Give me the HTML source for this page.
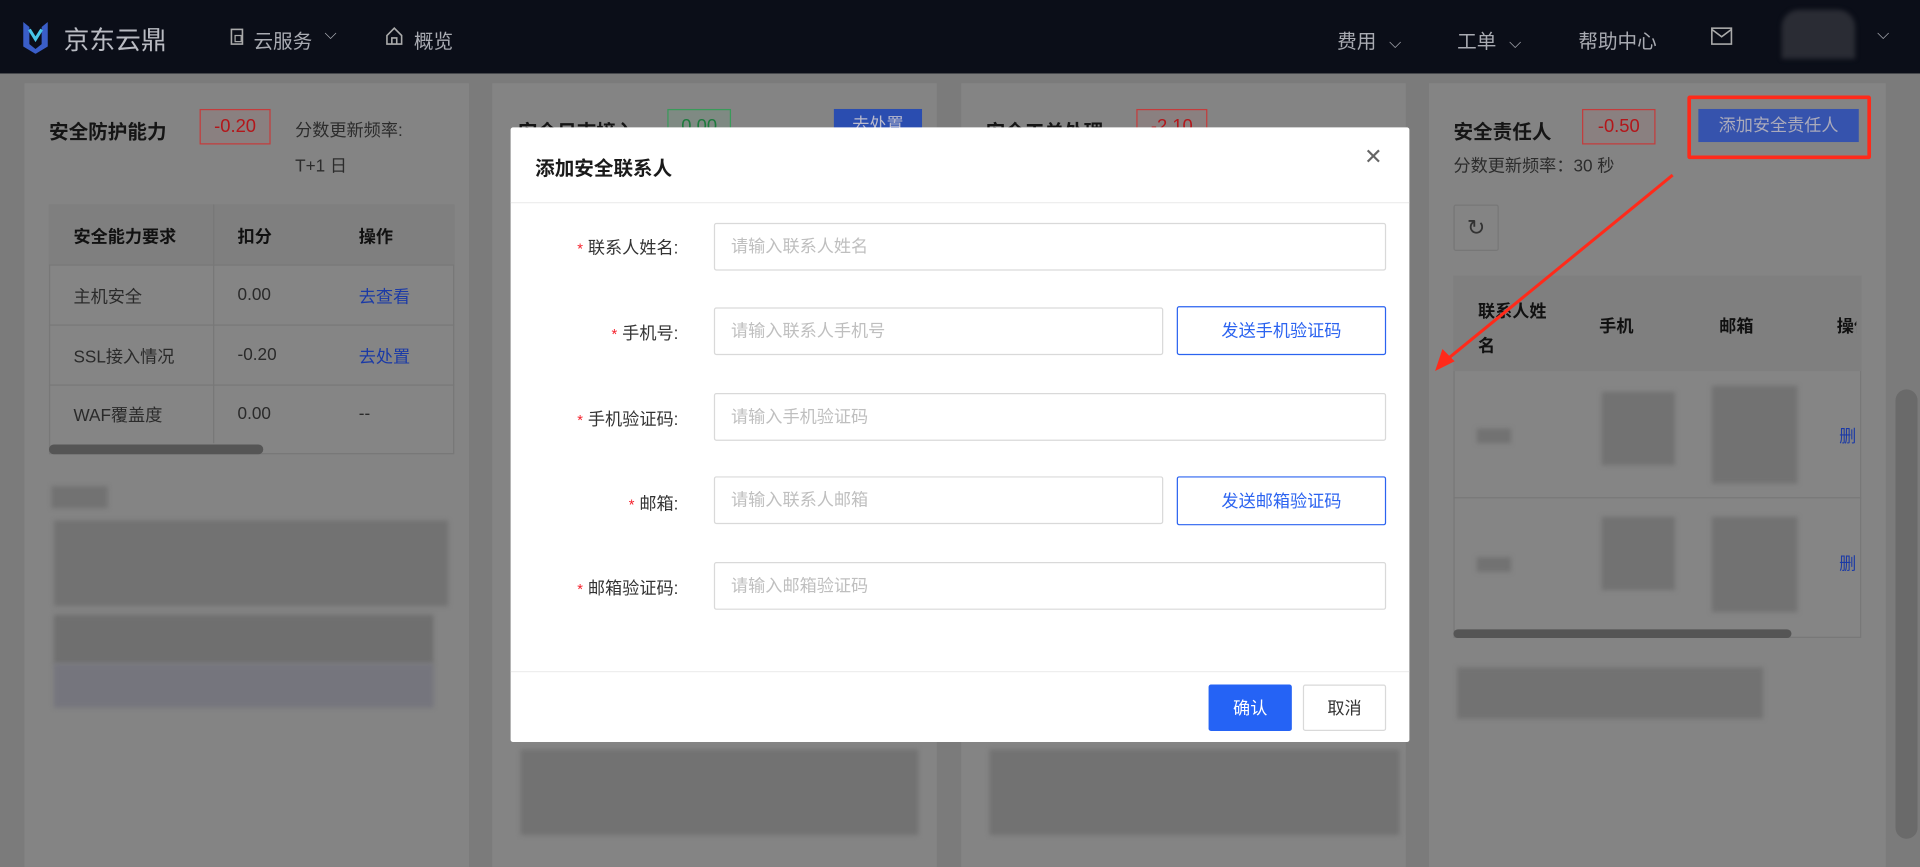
<!DOCTYPE html>
<html><head><meta charset="utf-8"><style>
*{box-sizing:border-box;margin:0;padding:0}
html,body{width:1920px;height:839px;overflow:hidden;background:#7b7b7b;font-family:"Liberation Sans","Noto Sans CJK SC",sans-serif}
#w{position:absolute;left:0;top:0;width:1568px;height:685px;transform:scale(1.22449);transform-origin:0 0;background:#7b7b7b}
.a{position:absolute}
.nav{left:0;top:0;width:1568px;height:60px;background:#0b0e18;color:#a9abb2;font-size:16px}
.card{background:#848484;top:68px;height:640px}
.t{font-size:16px;font-weight:bold;color:#151515}
.badge{height:29px;border:1px solid #c43c3c;color:#b3161a;font-size:15px;line-height:27px;text-align:center;background:#8a8080}
.g{font-size:14px;color:#2c2c2c}
.blur{background:#727272;filter:blur(2px)}
.modal{left:417px;top:104px;width:734px;height:502px;background:#fff;border-radius:2px}
.lbl{font-size:14px;color:#333;text-align:right;width:140px}
.lbl b{color:#f5222d;font-weight:normal;margin-right:4px;font-size:12px}
.inp{border:1px solid #d9d9d9;height:39px;font-size:14px;color:#bfbfbf;line-height:37px;padding-left:13px;border-radius:2px}
.btnb{border:1px solid #2b63f0;color:#2b63f0;height:40px;font-size:14px;line-height:38px;text-align:center;border-radius:2px}
.cell{font-size:14px;color:#2a2a2a;white-space:nowrap}
</style></head><body><div id="w">
<div class="a nav">
 <svg class="a" style="left:17px;top:16px" width="24" height="28" viewBox="0 0 24 28"><path d="M2 2 L7 6 L7 20 L12 24 L17 20 L17 6 L22 2 L22 22 L12 28 L2 22Z" fill="#3a5ec8"/><path d="M7 8 L12 16 L17 8" stroke="#48c6e8" stroke-width="2.5" fill="none"/></svg>
 <div class="a" style="left:52px;top:17px;font-size:21px;color:#b9bbc2">京东云鼎</div>
 <svg class="a" style="left:188px;top:23px" width="13" height="14"><rect x="1" y="1" width="9" height="12" fill="none" stroke="#aaa" stroke-width="1.3"/><rect x="4" y="6" width="5" height="5" fill="none" stroke="#aaa"/></svg>
 <div class="a" style="left:207px;top:20px">云服务</div>
 <div class="a" style="left:265px;top:20px;font-size:13px">⌵</div>
 <svg class="a" style="left:315px;top:22px" width="14" height="15"><path d="M1 7 L7 1 L13 7 V14 H1Z M5 14 V9 H9 V14" fill="none" stroke="#aaa" stroke-width="1.3"/></svg>
 <div class="a" style="left:338px;top:20px">概览</div>
 <div class="a" style="left:1092px;top:20px">费用 <span style="font-size:13px;margin-left:6px">⌵</span></div>
 <div class="a" style="left:1190px;top:20px">工单 <span style="font-size:13px;margin-left:6px">⌵</span></div>
 <div class="a" style="left:1289px;top:20px">帮助中心</div>
 <svg class="a" style="left:1397px;top:22px" width="18" height="15"><rect x="1" y="1" width="16" height="13" fill="none" stroke="#aaa" stroke-width="1.3"/><path d="M1 2 L9 8 L17 2" fill="none" stroke="#aaa" stroke-width="1.3"/></svg>
 <div class="a blur" style="left:1455px;top:8px;width:60px;height:40px;background:#2a2c34;border-radius:14px 14px 0 0"></div>
 <div class="a" style="left:1533px;top:20px;font-size:13px">⌵</div>
</div>

<div class="a card" style="left:20px;width:363px"></div>
<div class="a card" style="left:402px;width:363px"></div>
<div class="a card" style="left:785px;width:363px"></div>
<div class="a card" style="left:1167px;width:373px"></div>
<div class="a" style="left:1548px;top:318px;width:18px;height:367px;background:#6a6a6a;border-radius:9px"></div>

<div class="a t" style="left:40px;top:94px">安全防护能力</div>
<div class="a badge" style="left:163px;top:89px;width:58px">-0.20</div>
<div class="a g" style="left:241px;top:96px">分数更新频率:</div>
<div class="a g" style="left:241px;top:125px">T+1 日</div>
<div class="a" style="left:40px;top:167px;width:331px;height:204px;border:1px solid #787878;background:#858585"></div>
<div class="a" style="left:40px;top:167px;width:331px;height:49px;background:#7f7f7f"></div>
<div class="a" style="left:174px;top:167px;width:1px;height:195px;background:#787878"></div>
<div class="a" style="left:40px;top:216px;width:331px;height:1px;background:#787878"></div>
<div class="a" style="left:40px;top:265px;width:331px;height:1px;background:#787878"></div>
<div class="a" style="left:40px;top:314px;width:331px;height:1px;background:#787878"></div>
<div class="a cell" style="left:60px;top:183px;font-weight:bold;color:#111">安全能力要求</div>
<div class="a cell" style="left:194px;top:183px;font-weight:bold;color:#111">扣分</div>
<div class="a cell" style="left:293px;top:183px;font-weight:bold;color:#111">操作</div>
<div class="a cell" style="left:60px;top:232px">主机安全</div><div class="a cell" style="left:194px;top:232px">0.00</div><div class="a cell" style="left:293px;top:232px;color:#1b3aa6">去查看</div>
<div class="a cell" style="left:60px;top:281px">SSL接入情况</div><div class="a cell" style="left:194px;top:281px">-0.20</div><div class="a cell" style="left:293px;top:281px;color:#1b3aa6">去处置</div>
<div class="a cell" style="left:60px;top:329px">WAF覆盖度</div><div class="a cell" style="left:194px;top:329px">0.00</div><div class="a cell" style="left:293px;top:329px">--</div>
<div class="a" style="left:40px;top:363px;width:175px;height:8px;background:#555;border-radius:4px"></div>
<div class="a blur" style="left:42px;top:397px;width:46px;height:18px"></div>
<div class="a blur" style="left:44px;top:425px;width:322px;height:70px"></div>
<div class="a blur" style="left:44px;top:502px;width:310px;height:40px;background:#6f6f6f"></div>
<div class="a blur" style="left:44px;top:542px;width:310px;height:36px;background:#75757d"></div>

<div class="a t" style="left:423px;top:94px">安全日志接入</div>
<div class="a badge" style="left:545px;top:89px;width:52px;border-color:#3a9a5a;color:#1c7a3c;background:#7f8a83">0.00</div>
<div class="a" style="left:681px;top:89px;width:72px;height:24px;background:#2a4db0;color:#bbc;font-size:14px;text-align:center;line-height:24px">去处置</div>
<div class="a t" style="left:805px;top:94px">安全工单处理</div>
<div class="a badge" style="left:928px;top:89px;width:58px">-2.10</div>
<div class="a blur" style="left:425px;top:612px;width:325px;height:70px"></div>
<div class="a blur" style="left:808px;top:612px;width:335px;height:70px"></div>

<div class="a t" style="left:1187px;top:94px">安全责任人</div>
<div class="a badge" style="left:1292px;top:89px;width:60px">-0.50</div>
<div class="a" style="left:1387px;top:89px;width:131px;height:27px;background:#3653ad;color:#aab;font-size:14px;text-align:center;line-height:27px">添加安全责任人</div>
<div class="a" style="left:1378px;top:78px;width:150px;height:52px;border:3px solid #ff2a1a;border-radius:2px"></div>
<div class="a g" style="left:1187px;top:125px">分数更新频率：30 秒</div>
<div class="a" style="left:1187px;top:167px;width:37px;height:38px;border:1px solid #777;border-radius:2px;color:#333;font-size:18px;text-align:center;line-height:36px">↻</div>
<div class="a" style="left:1187px;top:225px;width:333px;height:296px;border:1px solid #787878;background:#858585"></div>
<div class="a" style="left:1187px;top:225px;width:333px;height:78px;background:#7f7f7f"></div>
<div class="a" style="left:1187px;top:406px;width:333px;height:1px;background:#787878"></div>
<div class="a" style="left:1207px;top:240px;font-size:14px;font-weight:bold;color:#111;width:60px;line-height:28px">联系人姓名</div>
<div class="a cell" style="left:1306px;top:256px;font-weight:bold;color:#111">手机</div>
<div class="a cell" style="left:1404px;top:256px;font-weight:bold;color:#111">邮箱</div>
<div class="a cell" style="left:1500px;top:256px;font-weight:bold;color:#111;width:16px;overflow:hidden">操作</div>
<div class="a blur" style="left:1308px;top:320px;width:60px;height:60px"></div>
<div class="a blur" style="left:1398px;top:315px;width:70px;height:80px"></div>
<div class="a blur" style="left:1308px;top:422px;width:60px;height:60px"></div>
<div class="a blur" style="left:1398px;top:422px;width:70px;height:78px"></div>
<div class="a blur" style="left:1206px;top:350px;width:28px;height:12px"></div>
<div class="a blur" style="left:1206px;top:455px;width:28px;height:12px"></div>
<div class="a cell" style="left:1502px;top:346px;color:#1b3aa6">删</div>
<div class="a cell" style="left:1502px;top:450px;color:#1b3aa6">删</div>
<div class="a" style="left:1187px;top:514px;width:276px;height:7px;background:#555;border-radius:4px"></div>
<div class="a blur" style="left:1190px;top:545px;width:250px;height:42px"></div>
<svg class="a" style="left:1160px;top:135px" width="215" height="180"><line x1="206" y1="8" x2="20" y2="160" stroke="#ff2a1a" stroke-width="2.5"/><path d="M12 168 L18 150 L28 160Z" fill="#ff2a1a"/></svg>

<div class="a modal">
 <div class="a" style="left:20px;top:20px;font-size:16px;font-weight:bold;color:#1a1a1a">添加安全联系人</div>
 <div class="a" style="left:697px;top:14px;font-size:18px;color:#666">✕</div>
 <div class="a" style="left:0;top:61px;width:734px;height:1px;background:#eee"></div>
 <div class="a lbl" style="left:-3px;top:88px"><b>*</b>联系人姓名:</div>
 <div class="a inp" style="left:166px;top:78px;width:549px">请输入联系人姓名</div>
 <div class="a lbl" style="left:-3px;top:158px"><b>*</b>手机号:</div>
 <div class="a inp" style="left:166px;top:147px;width:367px">请输入联系人手机号</div>
 <div class="a btnb" style="left:544px;top:146px;width:171px">发送手机验证码</div>
 <div class="a lbl" style="left:-3px;top:228px"><b>*</b>手机验证码:</div>
 <div class="a inp" style="left:166px;top:217px;width:549px">请输入手机验证码</div>
 <div class="a lbl" style="left:-3px;top:297px"><b>*</b>邮箱:</div>
 <div class="a inp" style="left:166px;top:285px;width:367px">请输入联系人邮箱</div>
 <div class="a btnb" style="left:544px;top:285px;width:171px">发送邮箱验证码</div>
 <div class="a lbl" style="left:-3px;top:366px"><b>*</b>邮箱验证码:</div>
 <div class="a inp" style="left:166px;top:355px;width:549px">请输入邮箱验证码</div>
 <div class="a" style="left:0;top:444px;width:734px;height:1px;background:#eee"></div>
 <div class="a" style="left:570px;top:455px;width:68px;height:38px;background:#2563f5;color:#fff;font-size:14px;text-align:center;line-height:38px;border-radius:2px">确认</div>
 <div class="a" style="left:647px;top:455px;width:68px;height:38px;border:1px solid #d9d9d9;color:#333;font-size:14px;text-align:center;line-height:36px;border-radius:2px">取消</div>
</div>
</div></body></html>
